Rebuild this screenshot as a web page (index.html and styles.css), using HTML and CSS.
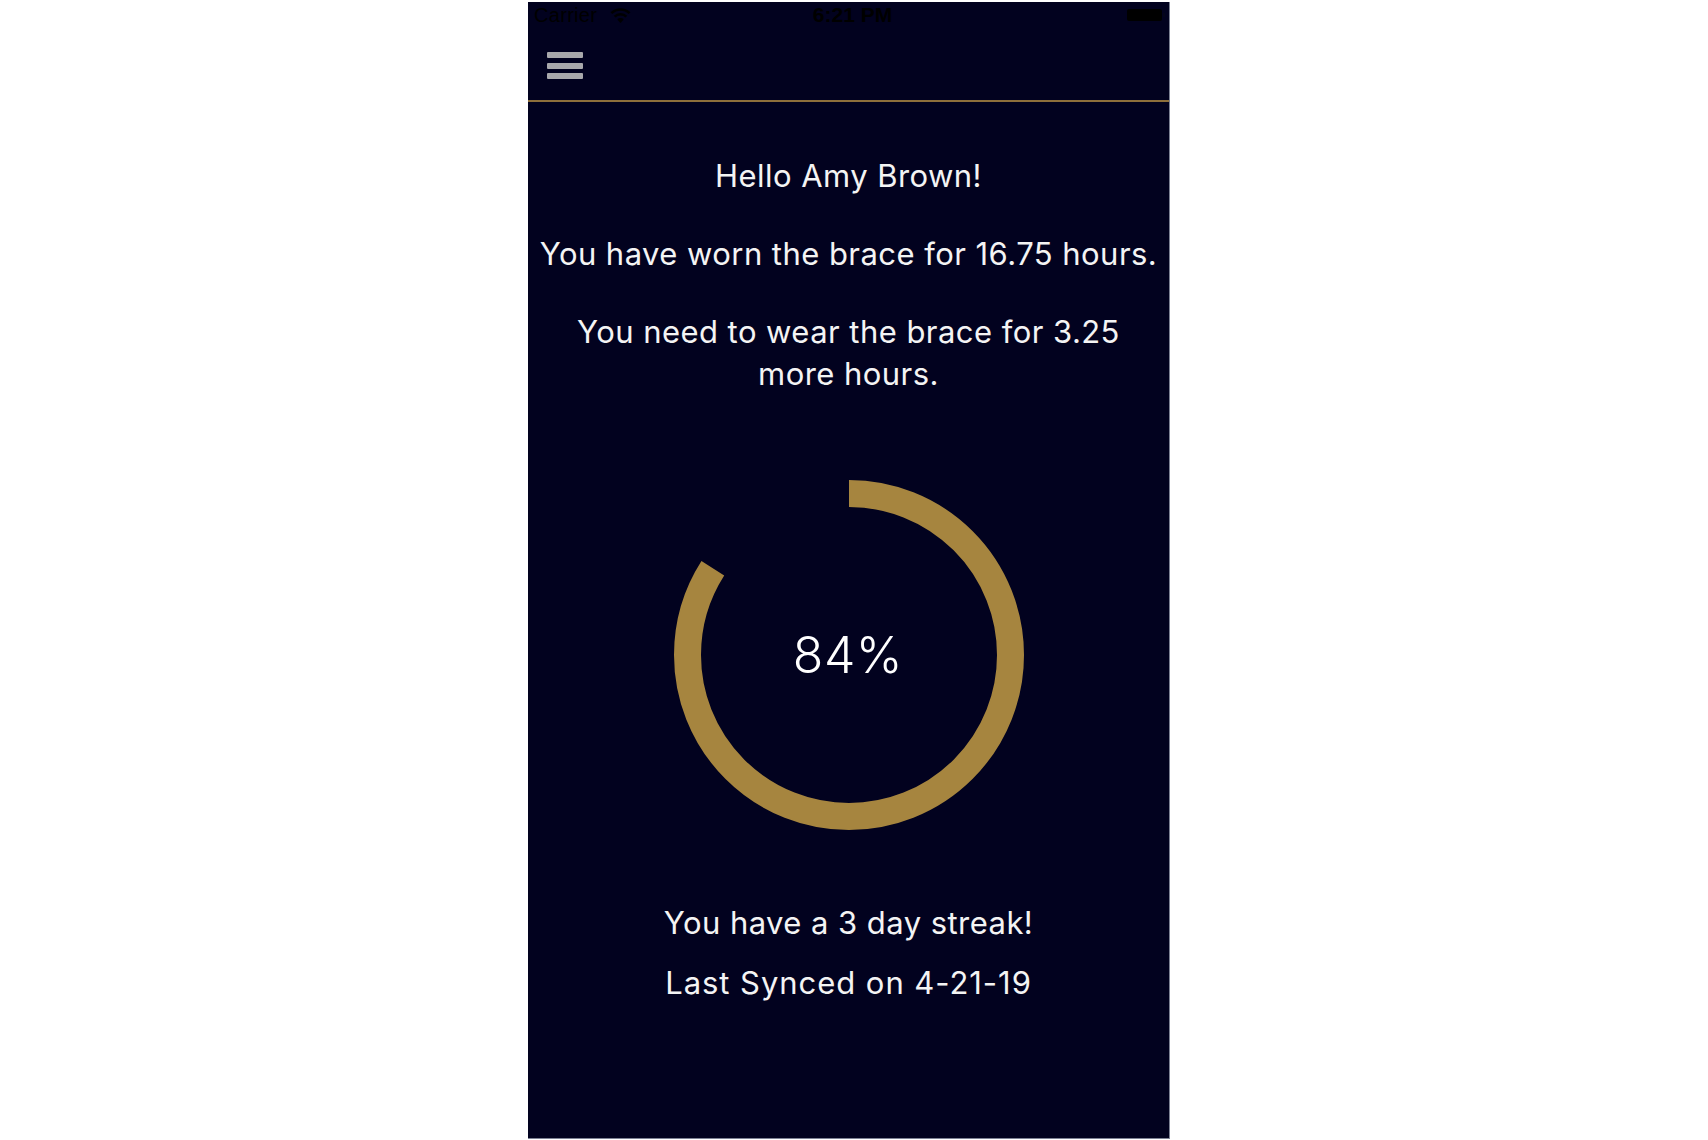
FILE: index.html
```html
<!DOCTYPE html>
<html lang="en">
<head>
<meta charset="utf-8">
<title>Brace Tracker</title>
<link rel="stylesheet" href="styles.css">
</head>
<body>
<div class="phone">
  <div class="statusbar">
    <div class="sb-left">
      <span class="carrier">Carrier</span>
      <svg class="wifi" width="21" height="15" viewBox="0 0 21 15">
        <path d="M10.5 15 L7.3 11.4 A4.6 4.6 0 0 1 13.7 11.4 Z" fill="#000"/>
        <path d="M4.6 8.6 A8.5 8.5 0 0 1 16.4 8.6" stroke="#000" stroke-width="2.4" fill="none"/>
        <path d="M1.4 5.2 A13 13 0 0 1 19.6 5.2" stroke="#000" stroke-width="2.4" fill="none"/>
      </svg>
    </div>
    <div class="time">6:21 PM</div>
    <div class="sb-right">
      <span class="battery"></span><span class="battery-tip"></span>
    </div>
  </div>
  <header class="navbar">
    <div class="hamburger">
      <span></span><span></span><span></span>
    </div>
  </header>
  <main class="content">
    <p class="msg">Hello Amy Brown!</p>
    <p class="msg">You have worn the brace for 16.75 hours.</p>
    <p class="msg">You need to wear the brace for 3.25<br>more hours.</p>
    <div class="ring">
      <svg class="ring-svg" width="350" height="350" viewBox="0 0 350 350">
        <circle cx="175" cy="175" r="161.5" fill="none" stroke="#a6853f" stroke-width="27" stroke-dasharray="852.4 2000" transform="rotate(-90 175 175)"/>
      </svg>
      <div class="percent">84%</div>
    </div>
    <p class="msg streak">You have a 3 day streak!</p>
    <p class="msg synced">Last Synced on 4-21-19</p>
  </main>
</div>
</body>
</html>
```
FILE: styles.css
```css
html, body {
  margin: 0;
  padding: 0;
  background: #ffffff;
}
body {
  padding-top: 2px;
}
.phone {
  margin-left: 528px;
  width: 641px;
  height: 1136px;
  background: #02021f;
  border-right: 1px solid #7d8294;
  border-bottom: 1px solid #7d8294;
  display: flex;
  flex-direction: column;
  font-family: "Inter", "Liberation Sans", sans-serif;
  color: #f4f4f4;
}
.statusbar {
  height: 28px;
  display: grid;
  grid-template-columns: 1fr auto 1fr;
  align-items: center;
  color: #000;
  font-family: "Liberation Sans", Arial, sans-serif;
  font-size: 20px;
  padding: 0 4px 2px 6px;
  box-sizing: border-box;
}
.sb-left {
  display: flex;
  align-items: center;
  gap: 13px;
}
.carrier {
  letter-spacing: 0.3px;
}
.wifi {
  display: block;
}
.time {
  font-weight: bold;
  font-size: 21px;
  padding-left: 6px;
}
.sb-right {
  display: flex;
  justify-content: flex-end;
  align-items: center;
}
.battery {
  display: block;
  width: 35px;
  height: 12px;
  background: #000;
  border-radius: 2px;
}
.battery-tip {
  display: block;
  width: 2px;
  height: 4px;
  margin-left: 1px;
  background: #05051a;
}
.navbar {
  height: 72px;
  box-sizing: border-box;
  padding: 22px 0 0 19px;
  border-bottom: 2px solid #8d6f3b;
}
.hamburger {
  width: 36px;
  display: flex;
  flex-direction: column;
  gap: 4.5px;
}
.hamburger span {
  display: block;
  height: 6px;
  background: #a9a9ab;
  border-radius: 1px;
}
.content {
  padding-top: 53px;
  display: flex;
  flex-direction: column;
  align-items: center;
  text-align: center;
}
.msg {
  margin: 0 0 36px 0;
  font-size: 31px;
  line-height: 42px;
  letter-spacing: 0.45px;
  white-space: nowrap;
}
.ring {
  margin-top: -36px;
  padding-top: 85px;
  display: grid;
  place-items: center;
  margin-bottom: 72px;
  margin-left: 1px;
}
.ring-svg,
.percent {
  grid-area: 1 / 1;
}
.ring-svg {
  display: block;
}
.percent {
  font-size: 50px;
  font-weight: 300;
  letter-spacing: 0.5px;
  color: #ffffff;
  margin-left: -2px;
}
.streak {
  margin-bottom: 18px;
}
.synced {
  margin-bottom: 0;
  letter-spacing: 0.95px;
}
```
